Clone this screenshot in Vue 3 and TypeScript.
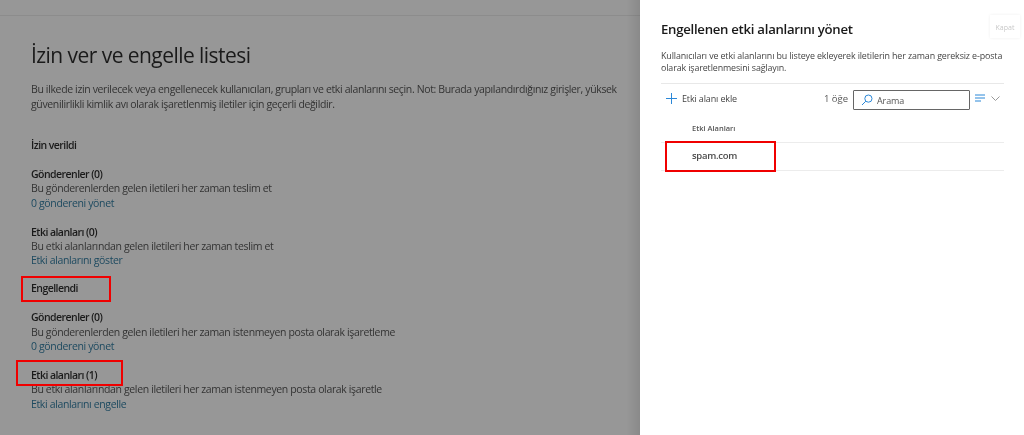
<script setup lang="ts">
interface Group { title: string; desc: string; link: string }
const allowed: Group[] = [
  { title: 'Gönderenler (0)', desc: 'Bu gönderenlerden gelen iletileri her zaman teslim et', link: '0 göndereni yönet' },
  { title: 'Etki alanları (0)', desc: 'Bu etki alanlarından gelen iletileri her zaman teslim et', link: 'Etki alanlarını göster' },
]
const blocked: Group[] = [
  { title: 'Gönderenler (0)', desc: 'Bu gönderenlerden gelen iletileri her zaman istenmeyen posta olarak işaretleme', link: '0 göndereni yönet' },
  { title: 'Etki alanları (1)', desc: 'Bu etki alanlarından gelen iletileri her zaman istenmeyen posta olarak işaretle', link: 'Etki alanlarını engelle' },
]
</script>

<template>
  <div class="page">
    <main class="main">
      <h1 class="title">İzin ver ve engelle listesi</h1>
      <p class="intro">Bu ilkede izin verilecek veya engellenecek kullanıcıları, grupları ve etki alanlarını seçin. Not: Burada yapılandırdığınız girişler, yüksek güvenilirlikli kimlik avı olarak işaretlenmiş iletiler için geçerli değildir.</p>
      <h2 class="section first">İzin verildi</h2>
      <section v-for="g in allowed" :key="g.link" class="group">
        <h3>{{ g.title }}</h3>
        <p>{{ g.desc }}</p>
        <a>{{ g.link }}</a>
      </section>
      <h2 class="section">Engellendi</h2>
      <section v-for="g in blocked" :key="g.link" class="group">
        <h3>{{ g.title }}</h3>
        <p>{{ g.desc }}</p>
        <a>{{ g.link }}</a>
      </section>
      <span class="mark mark-blocked"></span>
      <span class="mark mark-domains"></span>
    </main>

    <aside class="panel">
      <div class="close">Kapat</div>
      <h2 class="panel-title">Engellenen etki alanlarını yönet</h2>
      <p class="panel-desc">Kullanıcıları ve etki alanlarını bu listeye ekleyerek iletilerin her zaman gereksiz e-posta olarak işaretlenmesini sağlayın.</p>
      <div class="toolbar">
        <div class="add">
          <svg width="11" height="11" viewBox="0 0 11 11"><path d="M5.500 0v11M0 5.500h11" stroke="#2b88d8" stroke-width="1" fill="none"/></svg>
          <span>Etki alanı ekle</span>
        </div>
        <span class="count">1 öğe</span>
        <div class="search">
          <svg width="12" height="12" viewBox="0 0 12 12"><circle cx="7.400" cy="4.600" r="3.600" stroke="#2b88d8" fill="none"/><path d="M4.800 7.200 1 11" stroke="#2b88d8" fill="none"/></svg>
          <span>Arama</span>
        </div>
        <svg class="lines" width="10" height="8" viewBox="0 0 10 8"><path d="M0 1h10M0 4h10M0 7h6" stroke="#2b88d8" fill="none"/></svg>
        <svg class="chev" width="9" height="5" viewBox="0 0 9 5"><path d="M.5.5 4.500 4.500 8.500.5" stroke="#999" fill="none"/></svg>
      </div>
      <div class="col-head">Etki Alanları</div>
      <div class="row">spam.com</div>
      <span class="mark mark-spam"></span>
    </aside>
  </div>
</template>

<style scoped>
.page {
  position: relative;
  display: flex;
  width: 1024px;
  height: 435px;
  overflow: hidden;
  font-family: "Open Sans", "Noto Sans", sans-serif;
  filter: blur(0.35px);
}
.main {
  position: relative;
  flex: 1;
  box-sizing: border-box;
  padding: 0 17px 0 31px;
  background: #979797;
  color: #1d1d1d;
}
.main::before {
  content: "";
  display: block;
  height: 15px;
  margin: 0 -17px 0 -31px;
  border-bottom: 1px solid #8c8c8c;
}
.main::after {
  content: "";
  position: absolute;
  top: 0;
  right: 0;
  bottom: 0;
  width: 14px;
  background: linear-gradient(to right, rgba(0,0,0,0), rgba(0,0,0,.09));
}
.title {
  margin: 24px 0 0;
  font-size: 21px;
  line-height: 30px;
  font-weight: 400;
  letter-spacing: -0.55px;
  color: #1a1a1a;
}
.intro {
  margin: 12px 0 0;
  font-size: 10.500px;
  line-height: 15px;
  letter-spacing: -0.36px;
  color: #333;
}
.section {
  margin: 13.500px 0 0;
  font-size: 10.500px;
  line-height: 14.400px;
  font-weight: 600;
  letter-spacing: -0.55px;
  color: #1a1a1a;
}
.section.first { margin-top: 26px; }
.group { margin-top: 14.500px; }
.group h3 {
  margin: 0;
  font-size: 10.500px;
  line-height: 14.400px;
  font-weight: 600;
  letter-spacing: -0.55px;
  color: #1a1a1a;
}
.group p {
  margin: 0;
  font-size: 10.500px;
  line-height: 14.400px;
  letter-spacing: -0.36px;
  color: #333;
}
.group a {
  display: block;
  font-size: 10.500px;
  line-height: 14.400px;
  letter-spacing: -0.36px;
  color: #1d4a60;
}
.mark {
  position: absolute;
  box-sizing: border-box;
  border: 2px solid #f00000;
}
.mark-blocked { left: 21px; top: 276px; width: 90px; height: 26px; }
.mark-domains { left: 16px; top: 360px; width: 107px; height: 26px; }
.mark-spam { left: 25px; top: 141px; width: 111px; height: 31px; }
.panel {
  position: relative;
  width: 384px;
  flex: none;
  box-sizing: border-box;
  padding: 20px 20px 0 21px;
  background: #fff;
  color: #333;
}
.close {
  position: absolute;
  top: 15px;
  right: 4px;
  width: 30px;
  height: 23px;
  font-size: 7px;
  line-height: 26px;
  text-align: center;
  color: #c8c8c8;
  background: #fff;
  box-shadow: 0 0 3px rgba(0,0,0,.07);
}
.panel-title {
  margin: 0;
  font-size: 13.200px;
  line-height: 19px;
  font-weight: 600;
  letter-spacing: -0.28px;
  color: #1a1a1a;
}
.panel-desc {
  margin: 11px 0 0;
  padding-bottom: 9px;
  font-size: 8.900px;
  line-height: 12px;
  letter-spacing: -0.12px;
  color: #444;
  border-bottom: 1px solid #e8e8e8;
}
.toolbar {
  display: flex;
  align-items: center;
  height: 30px;
}
.add {
  display: flex;
  align-items: center;
  gap: 5px;
  margin: -2px 0 0 5px;
  flex: 1;
  font-size: 9px;
  letter-spacing: -0.14px;
  color: #444;
}
.count { font-size: 9.500px; margin: -2px 5px 0 0; color: #555; }
.search {
  display: flex;
  align-items: center;
  gap: 4px;
  box-sizing: border-box;
  width: 117px;
  height: 20px;
  margin-top: 2px;
  padding-left: 7px;
  border: 1px solid #666;
  border-radius: 1px;
  font-size: 9px;
  letter-spacing: -0.1px;
  color: #555;
}
.lines { margin: -2px 0 0 5px; }
.chev { margin: -2px 4px 0 6px; }
.col-head {
  padding: 8px 0 7px 31px;
  font-size: 7.500px;
  line-height: 13px;
  font-weight: 600;
  color: #555;
  border-bottom: 1px solid #ececec;
}
.row {
  padding-left: 31px;
  height: 27px;
  font-size: 9.500px;
  line-height: 26px;
  font-weight: 600;
  letter-spacing: -0.3px;
  color: #4a4a4a;
  border-bottom: 1px solid #ececec;
}
</style>
